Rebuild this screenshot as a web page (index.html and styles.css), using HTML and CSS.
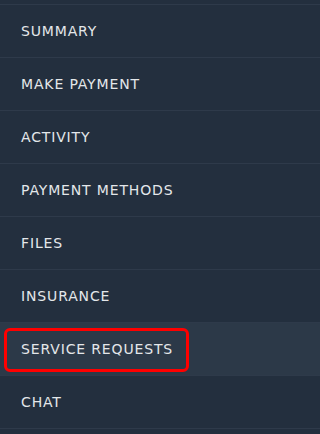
FILE: index.html
```html
<!DOCTYPE html>
<html>
<head>
<meta charset="utf-8">
<link rel="stylesheet" href="styles.css">
</head>
<body>
<nav class="sidebar">
  <ul class="menu">
    <li class="item">SUMMARY</li>
    <li class="item">MAKE PAYMENT</li>
    <li class="item">ACTIVITY</li>
    <li class="item">PAYMENT METHODS</li>
    <li class="item">FILES</li>
    <li class="item">INSURANCE</li>
    <li class="item active">SERVICE REQUESTS<span class="highlight"></span></li>
    <li class="item">CHAT</li>
  </ul>
</nav>
</body>
</html>
```
FILE: styles.css
```css
html, body {
  margin: 0;
  padding: 0;
  background: #232f3e;
  height: 100%;
}
.sidebar {
  background: #232f3e;
  height: 434px;
  overflow: hidden;
  padding-top: 4px;
  box-sizing: border-box;
}
.menu {
  list-style: none;
  margin: 0;
  padding: 0;
  border-bottom: 1px solid #2e3a4a;
}
.item {
  position: relative;
  display: flex;
  align-items: center;
  height: 52px;
  border-top: 1px solid #2e3a4a;
  padding-left: 21px;
  font-family: "DejaVu Sans", sans-serif;
  font-size: 14px;
  color: #e4e7ea;
  letter-spacing: 0.85px;
}
.item.active {
  background: #2c3948;
}
.highlight {
  position: absolute;
  left: 4px;
  top: 5px;
  width: 185px;
  height: 44px;
  border: 3px solid #ff0000;
  border-radius: 6px;
  box-sizing: border-box;
}
```
